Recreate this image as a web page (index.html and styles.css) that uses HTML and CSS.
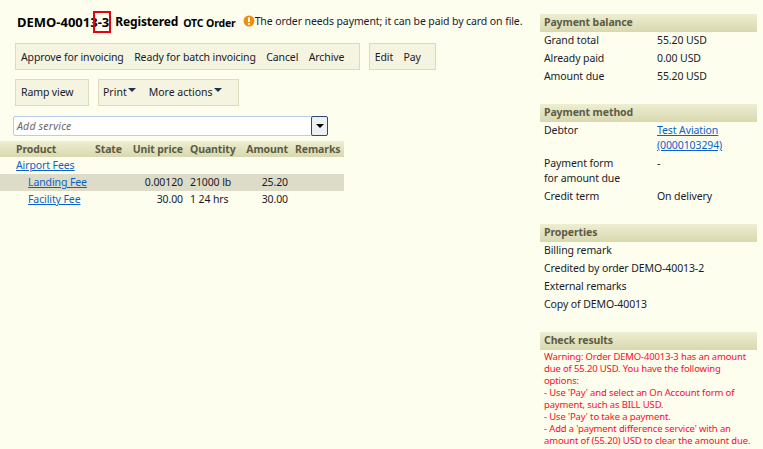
FILE: index.html
```html
<!DOCTYPE html>
<html lang="en">
<head>
<meta charset="utf-8">
<title>DEMO-40013-3</title>
<link rel="stylesheet" href="styles.css">
</head>
<body>
<div class="page">
  <main class="main">
    <header class="title">
      <h1 class="title-id">DEMO-40013-3</h1>
      <span class="title-state">Registered</span>
      <span class="title-type">OTC Order</span>
      <span class="notice">
        <svg class="notice-icon" viewBox="0 0 12 12" width="12" height="12" aria-hidden="true"><circle cx="6" cy="6" r="5.5" fill="#f08c10"/><rect x="5" y="2.4" width="2" height="4.6" fill="#fff"/><rect x="5" y="8" width="2" height="1.8" fill="#fff"/></svg>
        <span>The order needs payment; it can be paid by card on file.</span>
      </span>
      <span class="marker"></span>
    </header>
    <div class="toolbar">
      <div class="tools"><span>Approve for invoicing</span><span>Ready for batch invoicing</span><span>Cancel</span><span>Archive</span></div>
      <div class="tools"><span>Edit</span><span>Pay</span></div>
    </div>
    <div class="toolbar toolbar-second">
      <div class="tools tools-wide"><span>Ramp view</span></div>
      <div class="tools tools-menu"><span>Print<i class="caret"></i></span><span>More actions<i class="caret"></i></span></div>
    </div>
    <div class="combo">
      <span class="combo-text">Add service</span>
      <span class="combo-btn"><i class="combo-caret"></i></span>
    </div>
    <table class="grid">
      <thead>
        <tr>
          <th class="c-product">Product</th>
          <th class="c-state">State</th>
          <th class="c-price num">Unit price</th>
          <th class="c-qty">Quantity</th>
          <th class="c-amount num">Amount</th>
          <th class="c-remarks">Remarks</th>
        </tr>
      </thead>
      <tbody>
        <tr><td colspan="6"><a href="#">Airport Fees</a></td></tr>
        <tr class="selected"><td class="indent"><a href="#">Landing Fee</a></td><td></td><td class="num">0.00120</td><td>21000 lb</td><td class="num">25.20</td><td></td></tr>
        <tr><td class="indent"><a href="#">Facility Fee</a></td><td></td><td class="num">30.00</td><td>1 24 hrs</td><td class="num">30.00</td><td></td></tr>
      </tbody>
    </table>
  </main>
  <aside class="side">
    <section class="panel">
      <h2>Payment balance</h2>
      <dl class="pairs">
        <dt>Grand total</dt><dd>55.20 USD</dd>
        <dt>Already paid</dt><dd>0.00 USD</dd>
        <dt>Amount due</dt><dd>55.20 USD</dd>
      </dl>
    </section>
    <section class="panel">
      <h2>Payment method</h2>
      <dl class="pairs pairs-multi">
        <dt>Debtor</dt><dd><a href="#">Test Aviation (0000103294)</a></dd>
        <dt>Payment form<br>for amount due</dt><dd>-</dd>
        <dt>Credit term</dt><dd>On delivery</dd>
      </dl>
    </section>
    <section class="panel">
      <h2>Properties</h2>
      <ul class="props">
        <li>Billing remark</li>
        <li>Credited by order DEMO-40013-2</li>
        <li>External remarks</li>
        <li>Copy of DEMO-40013</li>
      </ul>
    </section>
    <section class="panel panel-last">
      <h2>Check results</h2>
      <p class="warn">Warning: Order DEMO-40013-3 has an amount due of 55.20 USD. You have the following options:<br>- Use 'Pay' and select an On Account form of payment, such as BILL USD.<br>- Use 'Pay' to take a payment.<br>- Add a 'payment difference service' with an amount of (55.20) USD to clear the amount due.</p>
    </section>
  </aside>
</div>
</body>
</html>
```
FILE: styles.css
```css
html, body { margin: 0; padding: 0; height: 100%; overflow: hidden; }
body {
  background: #fdfeee;
  color: #1a1a2a;
  font: 10.5px/18px "Noto Sans", sans-serif;
  letter-spacing: -0.1px;
}
a { color: #0b63c9; }
.page { display: flex; height: 449px; }
.main { width: 344px; flex: none; }
.side { width: 217px; flex: none; margin-left: 196px; padding-top: 14px; }

.title { position: relative; display: flex; align-items: center; height: 22px; margin-top: 11px; padding-left: 17px; white-space: nowrap; }
.title-id { margin: 0; font-size: 13px; font-weight: 700; color: #000; letter-spacing: 0; }
.title-state { margin-left: 6px; font-size: 12px; font-weight: 700; color: #000; letter-spacing: -0.15px; }
.title-type { margin-left: 5px; margin-top: 1px; font-size: 10.5px; font-weight: 700; color: #000; letter-spacing: -0.15px; }
.notice { display: flex; align-items: center; margin-left: 7px; margin-top: -3px; }
.notice-icon { flex: none; }
.marker { position: absolute; left: 93px; top: 0; width: 14px; height: 18px; border: 2px solid #e8000c; }

.toolbar { display: flex; gap: 9px; margin: 10px 0 0 15px; }
.toolbar-second { margin-top: 9px; }
.toolbar-second .tools { padding-bottom: 2px; }
.tools { display: flex; gap: 10.5px; box-sizing: border-box; height: 27px; padding: 0 14.5px 0 5px; align-items: center; background: #f4f4e0; border: 1px solid #dcdcb8; white-space: nowrap; letter-spacing: -0.12px; }
.tools-wide { width: 74px; }
.tools-menu { gap: 13px; padding: 0 16px 2px 4px; letter-spacing: 0; }
.caret { display: inline-block; margin: 0 0 4px 1px; border: 4px solid transparent; border-top: 4px solid #1f3250; border-bottom: 0; }

.combo { display: flex; box-sizing: border-box; width: 315px; height: 20px; margin: 10px 0 0 13px; background: #fff; border: 1px solid #b8cdea; border-radius: 2px; }
.combo-text { flex: 1; padding-left: 3px; font-style: italic; color: #6a6a6a; line-height: 18px; letter-spacing: 0.2px; }
.combo-btn { display: flex; align-items: center; justify-content: center; width: 15px; margin: -1px; background: #eef1f4; border: 1px solid #2f4a6e; border-radius: 2px; }
.combo-caret { border: 4px solid transparent; border-top: 4px solid #000; border-bottom: 0; }

.grid { width: 344px; margin-top: 5px; border-collapse: collapse; table-layout: fixed; }
.grid th { height: 16px; padding: 0; text-align: left; font-weight: 700; color: #5c5c44; background: linear-gradient(#eeeed2, #d8d8b0); line-height: 16px; white-space: nowrap; }
.grid td { height: 17px; padding: 0 0 1px; box-sizing: border-box; line-height: 16px; white-space: nowrap; }
.grid tbody tr:first-child td { padding-left: 16px; }
.grid .num { text-align: right; }
.grid .indent { padding-left: 28px; }
.selected td { background: #dcdcc8; }
.c-product { width: 95px; padding-left: 16px !important; box-sizing: border-box; }
.c-state { width: 27px; }
.c-price { width: 61px; }
.c-qty { width: 52px; padding-left: 7px !important; }
.c-amount { width: 46px; }
.c-remarks { padding-left: 7px !important; }
.grid td:nth-child(4) { padding-left: 7px; }

.panel { margin-bottom: 18px; }
.panel-last { margin-bottom: 0; }
.panel h2 { margin: 0; height: 18px; padding-left: 4px; font-size: 10.5px; line-height: 17px; font-weight: 700; color: #5c5c44; background: linear-gradient(#eeeed2, #d8d8b0); }
.pairs { display: grid; grid-template-columns: 113px 1fr; margin: 0; padding-left: 4px; }
.pairs dt, .pairs dd { margin: 0; line-height: 17px; padding-bottom: 1px; }
.pairs-multi dt, .pairs-multi dd { line-height: 15px; padding: 1px 0 2px; }
.props { margin: 0; padding: 0 0 0 4px; list-style: none; }
.props li { line-height: 17px; padding-bottom: 1px; }
.warn { margin: 1px 0 0; padding-left: 4px; font-size: 9.5px; line-height: 12px; color: #ff0a28; letter-spacing: -0.15px; }
```
